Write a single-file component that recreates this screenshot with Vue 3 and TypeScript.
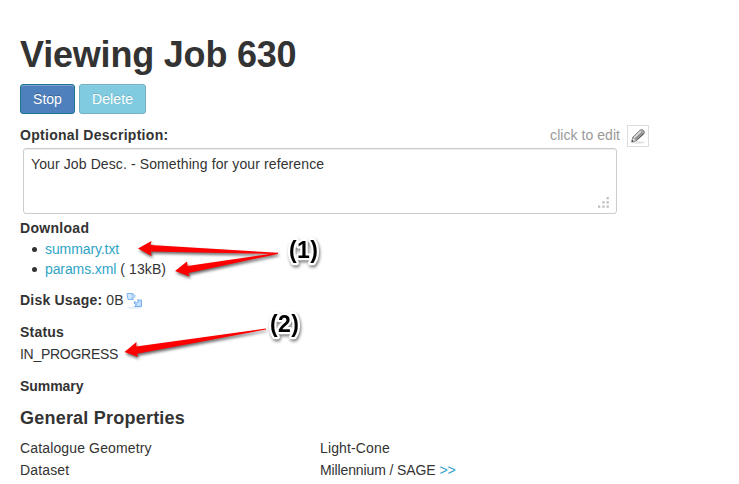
<script setup lang="ts">
interface DownloadFile {
  name: string
  size?: string
  kind: string
}

interface Property {
  label: string
  value: string
  more?: boolean
}

const files: DownloadFile[] = [
  { name: 'summary.txt', kind: 'txt' },
  { name: 'params.xml', size: '( 13kB)', kind: 'xml' },
]

const properties: Property[] = [
  { label: 'Catalogue Geometry', value: 'Light-Cone' },
  { label: 'Dataset', value: 'Millennium / SAGE', more: true },
]
</script>

<template>
  <main class="page">
    <h1>Viewing Job 630</h1>
    <div class="actions">
      <button class="btn stop" type="button">Stop</button>
      <button class="btn delete" type="button">Delete</button>
    </div>

    <section class="description">
      <div class="description-head">
        <strong class="description-label">Optional Description:</strong>
        <div class="edit">
          <span class="hint">click to edit</span>
          <span class="edit-button">
            <svg width="20" height="20" viewBox="0 0 20 20">
              <ellipse cx="10" cy="16.5" rx="7" ry="1.2" fill="#e2e2e2" />
              <path d="M3.8 15.8 4.8 11.2 12.2 4.2Q13.5 3.2 14.8 4L16 5.2Q16.8 6.6 15.8 7.9L8.4 14.6Z" fill="#aaa" stroke="#777" stroke-width="1" />
              <path d="M6.2 11.6 12.9 5.4" stroke="#ddd" stroke-width="1.6" />
              <path d="M7.5 12.8 14.4 6.4" stroke="#8e8e8e" stroke-width="1.4" />
              <path d="M8.7 14 15.5 7.7" stroke="#555" stroke-width="1" />
              <path d="M3.8 15.8 4.9 11.5 8.2 14.5Z" fill="#eee" stroke="#888" stroke-width=".7" />
              <path d="M3.6 16 4.3 14 5.7 15.3Z" fill="#333" />
            </svg>
          </span>
        </div>
      </div>
      <div class="textarea">
        <span>Your Job Desc. - Something for your reference</span>
        <svg class="grip" width="11" height="11" viewBox="0 0 11 11">
          <path d="M8.5 0h2.3v2.3H8.5zM4.3 4.2h2.3v2.3H4.3zM8.5 4.2h2.3v2.3H8.5zM0 8.4h2.3v2.3H0zM4.3 8.4h2.3v2.3H4.3zM8.5 8.4h2.3v2.3H8.5z" fill="#bdbdbd" />
        </svg>
      </div>
    </section>

    <section class="download">
      <strong class="download-label">Download</strong>
      <ul>
        <li v-for="file in files" :key="file.name">
          <a>{{ file.name }}</a><span v-if="file.size" class="size">{{ file.size }}</span>
        </li>
      </ul>
    </section>

    <div class="disk">
      <strong>Disk Usage:</strong>
      <span class="usage">0B</span>
      <svg width="18" height="18" viewBox="0 0 18 18">
        <ellipse cx="8" cy="15.8" rx="7" ry="1" fill="#e1edfb" />
        <path d="M1 1.5H7L5.8 3.2 8 2.5 9.3 4.2 7 6.2V4.8L5.4 6 7.4 7.5H2Z" fill="#d0e8ff" stroke="#83b8ee" />
        <path d="M15.5 8V14.5H8.5L10.5 12.8 8 11.2 8.5 9.5 10.5 10.8 12.5 9.8 11.3 8Z" fill="#c0dfff" stroke="#75adf0" />
      </svg>
    </div>

    <section class="status">
      <strong>Status</strong>
      <div>IN_PROGRESS</div>
    </section>

    <strong class="summary">Summary</strong>
    <h2>General Properties</h2>
    <dl class="properties">
      <template v-for="item in properties" :key="item.label">
        <dt>{{ item.label }}</dt>
        <dd><span :class="{ linked: item.more }">{{ item.value }}</span><a v-if="item.more" class="more">&gt;&gt;</a></dd>
      </template>
    </dl>

    <svg class="annotations" width="739" height="484" viewBox="0 0 739 484">
      <g class="arrows" fill="#fe0000">
        <path d="M138 248.5 151.5 241 150.5 245 278 252.8V254L151 251.5 151.5 256Z" />
        <path d="M175 271 187 261.5 187.5 266 278 252.8V254L188.5 273 189.5 276.5Z" />
        <path d="M124.5 352 136.5 342 136.3 346.5 266 328.5V329.5L137 353.8 138 357Z" />
      </g>
      <g class="callouts">
        <text x="289" y="257.5" textLength="29">(1)</text>
        <text x="270" y="332" textLength="29">(2)</text>
      </g>
    </svg>
  </main>
</template>

<style>
body {
  background: #fff;
}
</style>

<style scoped>
.page {
  position: relative;
  box-sizing: border-box;
  width: 739px;
  height: 484px;
  padding: 35px 20px 0;
  overflow: hidden;
  color: #333;
  font: 14px/20px "Liberation Sans", Arial, sans-serif;
}
h1, h2, ul, dl, dd {
  margin: 0;
  padding: 0;
}
h1 {
  height: 49px;
  font-size: 36px;
  line-height: 40px;
  letter-spacing: -.2px;
}
.actions {
  display: flex;
  gap: 4px;
  height: 30px;
}
.btn {
  box-sizing: border-box;
  height: 30px;
  padding: 0;
  border: 1px solid #1c7594;
  border-radius: 3px;
  background: #4d80bd;
  box-shadow: inset 0 1px 0 #82a6d1;
  color: #fff;
  font: 14px/20px "Liberation Sans", Arial, sans-serif;
  text-shadow: 0 -1px 0 rgba(0, 0, 0, .25);
}
.stop {
  width: 55px;
}
.delete {
  width: 67px;
  border-color: #71b0c3;
  background: #80cbe0;
  box-shadow: inset 0 1px 0 #8ed0e3;
  letter-spacing: .1px;
  text-shadow: 0 -1px 0 rgba(0, 0, 0, .12);
}
.description-head {
  display: flex;
  justify-content: space-between;
  width: 629px;
  height: 23px;
  margin-top: 11px;
}
.description-label {
  letter-spacing: .29px;
}
.edit {
  display: flex;
  gap: 7px;
}
.hint {
  color: #999;
  letter-spacing: .05px;
}
.edit-button {
  box-sizing: border-box;
  width: 22px;
  height: 22px;
  border: 1px solid #ddd;
}
.edit-button svg {
  display: block;
}
.textarea {
  position: relative;
  box-sizing: border-box;
  width: 594px;
  height: 66px;
  margin-left: 3px;
  padding: 5px 7px;
  border: 1px solid #ccc;
  border-radius: 3px;
  box-shadow: inset 0 1px 1px rgba(0, 0, 0, .075);
  letter-spacing: .11px;
}
.grip {
  position: absolute;
  right: 7px;
  bottom: 5px;
}
.download {
  margin-top: 4px;
}
.download-label {
  letter-spacing: .3px;
}
ul {
  margin-top: 1px;
  padding-left: 12px;
  list-style: none;
}
li {
  display: flex;
  align-items: center;
}
li::before {
  width: 5px;
  height: 5px;
  margin: 1px 8px 0 0;
  border-radius: 50%;
  background: #333;
  content: "";
}
li a {
  letter-spacing: -.1px;
}
.size {
  margin-left: 4px;
  letter-spacing: .08px;
}
a {
  color: #2fa4c7;
}
.disk {
  display: flex;
  height: 20px;
  margin-top: 11px;
}
.disk strong {
  letter-spacing: .2px;
}
.usage {
  margin: 0 3px 0 4px;
}
.disk svg {
  margin-top: 2px;
}
.status {
  margin-top: 12px;
}
.status strong {
  letter-spacing: .2px;
}
.status div {
  margin-top: 2px;
  letter-spacing: -.28px;
}
.summary {
  display: block;
  margin-top: 12px;
  letter-spacing: -.05px;
}
h2 {
  margin: 12px 0 10px;
  font-size: 18px;
  line-height: 20px;
  letter-spacing: .22px;
}
.properties {
  display: grid;
  grid-template-columns: 300px 300px;
  row-gap: 2px;
  letter-spacing: .14px;
}
.linked {
  letter-spacing: -.12px;
}
.more {
  margin-left: 4px;
  letter-spacing: -.1px;
}
.annotations {
  position: absolute;
  inset: 0;
}
.arrows {
  filter: drop-shadow(1px 2px 1.5px rgba(0, 0, 0, .6));
}
.callouts {
  font: bold 23px "Liberation Sans", Arial, sans-serif;
  fill: #000;
  stroke: #fff;
  stroke-width: 4.5px;
  stroke-linejoin: round;
  paint-order: stroke;
  filter: drop-shadow(1px 2px 1.5px rgba(0, 0, 0, .5));
}
</style>
